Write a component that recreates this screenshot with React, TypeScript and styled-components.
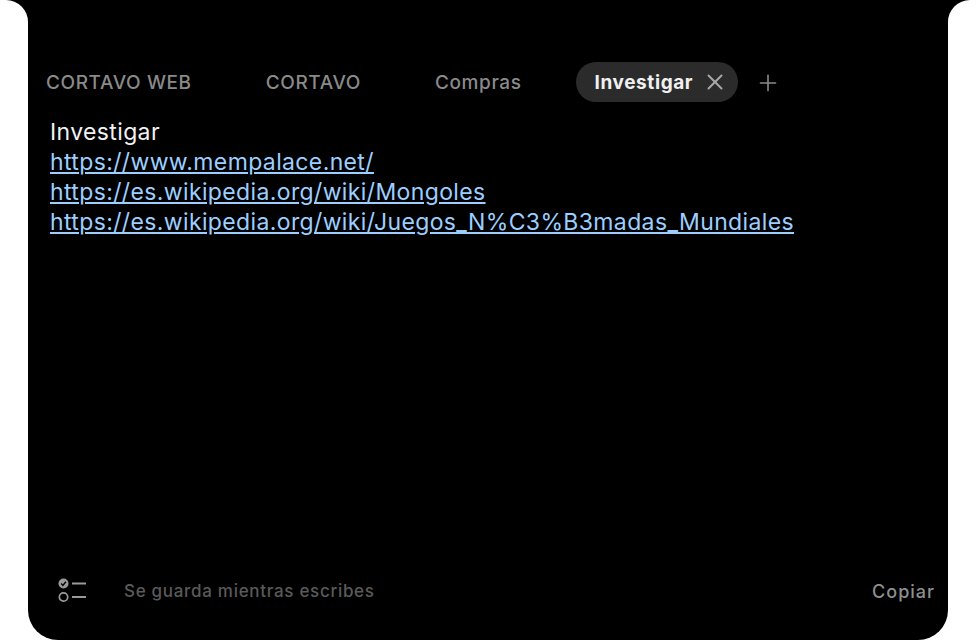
import styled, { createGlobalStyle } from "styled-components";
import { X, Plus } from "lucide-react";

const tabs = ["CORTAVO WEB", "CORTAVO", "Compras"];
const links = [
  "https://www.mempalace.net/",
  "https://es.wikipedia.org/wiki/Mongoles",
  "https://es.wikipedia.org/wiki/Juegos_N%C3%B3madas_Mundiales",
];

const Global = createGlobalStyle`
  html, body {
    margin: 0;
    padding: 0;
    background: #fff;
  }
  body {
    font-family: Inter, "Liberation Sans", sans-serif;
  }
`;

const Frame = styled.div`
  width: 976px;
  height: 640px;
  display: flex;
  background: #000;
  overflow: hidden;
`;

const Gutter = styled.div<{ $side: "left" | "right" }>`
  width: 28px;
  background: #fff;
  border-top-${(p) => (p.$side === "left" ? "right" : "left")}-radius: 22px;
`;

const Center = styled.div`
  flex: 1;
  background: #fff;
  display: flex;
`;

const Panel = styled.main`
  flex: 1;
  background: #000;
  border-radius: 0 0 30px 30px;
  display: flex;
  flex-direction: column;
  padding: 62px 14px 0 18px;
`;

const TabBar = styled.nav`
  display: flex;
  align-items: center;
  height: 40px;
`;

const Tab = styled.div`
  font-size: 19px;
  font-weight: 500;
  letter-spacing: 0.6px;
  color: #8a8a8a;
  margin-right: 74px;
  white-space: nowrap;
`;

const ActiveTab = styled.div`
  display: flex;
  align-items: center;
  height: 40px;
  padding: 0 10px 0 18px;
  margin-left: -19px;
  border-radius: 20px;
  background: #2b2b2b;
  color: #f0f0f0;
  font-size: 19px;
  font-weight: 700;
  letter-spacing: 0.6px;
  gap: 9px;
`;

const AddTab = styled.div`
  display: flex;
  color: #8a8a8a;
  margin: 2px 0 0 17px;
`;

const Note = styled.section`
  flex: 1;
  padding: 15px 0 0 4px;
  font-size: 23px;
  line-height: 30px;
  letter-spacing: 0.37px;
  color: #f2f2f2;
`;

const NoteLink = styled.a`
  display: block;
  color: #9ccfff;
  text-decoration: underline;
`;

const Footer = styled.footer`
  display: flex;
  align-items: center;
  height: 28px;
  margin-bottom: 35px;
`;

const ListIcon = styled.svg`
  width: 30px;
  height: 26px;
  margin-left: 12px;
  color: #9a9a9a;
`;

const Status = styled.span`
  flex: 1;
  margin-left: 36px;
  font-size: 17px;
  font-weight: 500;
  letter-spacing: 0.7px;
  color: #5a5a5a;
`;

const CopyButton = styled.button`
  border: 0;
  padding: 0;
  margin-right: -1px;
  background: none;
  font: inherit;
  font-size: 18px;
  font-weight: 500;
  letter-spacing: 1px;
  color: #8f8f8f;
`;

const App = () => {
  return (
    <Frame>
      <Global />
      <Gutter $side="left" />
      <Center>
        <Panel>
          <TabBar>
            {tabs.map((tab) => (
              <Tab key={tab}>{tab}</Tab>
            ))}
            <ActiveTab>
              Investigar
              <X size={26} strokeWidth={1.8} color="#a8a8a8" />
            </ActiveTab>
            <AddTab>
              <Plus size={26} strokeWidth={1.5} />
            </AddTab>
          </TabBar>
          <Note>
            <div>Investigar</div>
            {links.map((link) => (
              <NoteLink key={link} href={link}>
                {link}
              </NoteLink>
            ))}
          </Note>
          <Footer>
            <ListIcon viewBox="0 0 30 26" fill="none">
              <circle cx="5.5" cy="5.5" r="5" fill="currentColor" />
              <path d="M3.2 5.6l1.7 1.8 3-3.6" stroke="#000" strokeWidth="1.4" />
              <circle cx="5.5" cy="19" r="4.2" stroke="currentColor" strokeWidth="1.7" />
              <path d="M14 5.5h14M14 19h14" stroke="currentColor" strokeWidth="1.8" />
            </ListIcon>
            <Status>Se guarda mientras escribes</Status>
            <CopyButton>Copiar</CopyButton>
          </Footer>
        </Panel>
      </Center>
      <Gutter $side="right" />
    </Frame>
  );
};

export default App;
